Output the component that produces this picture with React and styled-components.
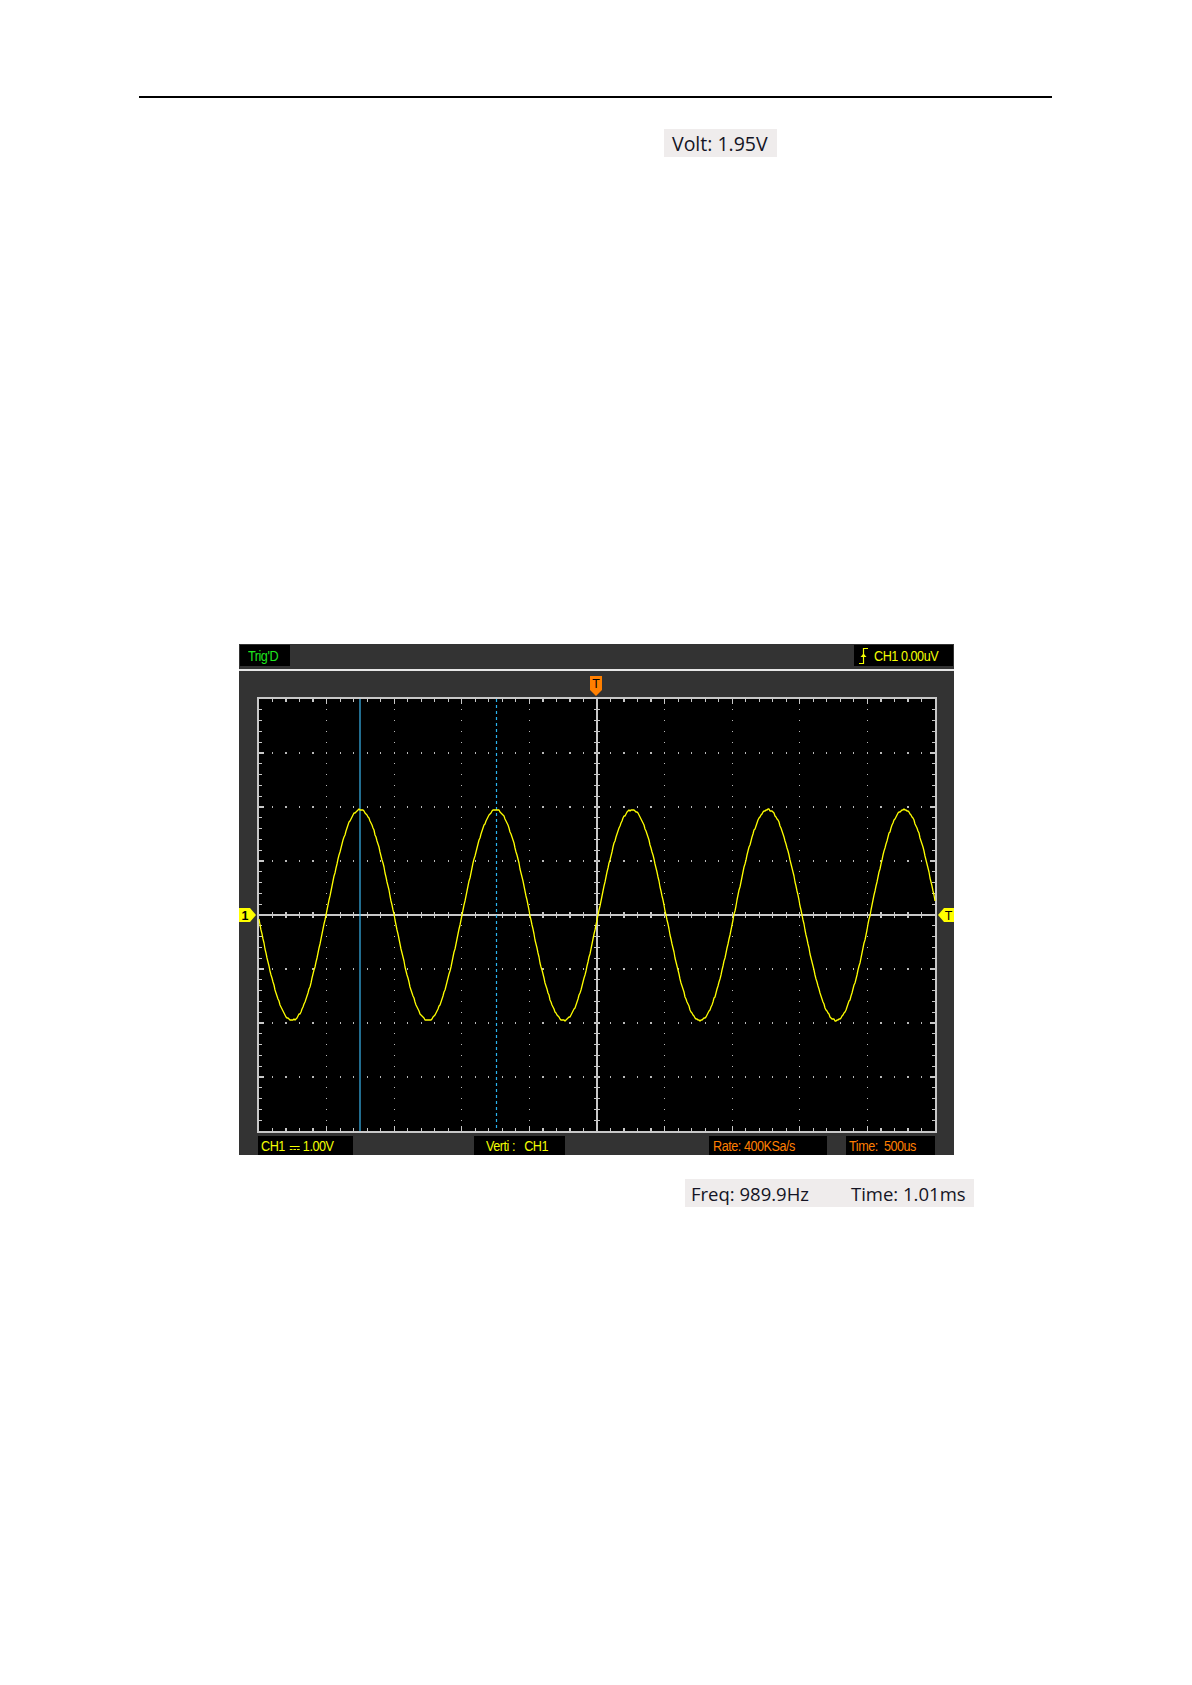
import React from "react";
import styled, { createGlobalStyle } from "styled-components";

const GlobalStyle = createGlobalStyle`
  html, body {
    margin: 0;
    padding: 0;
    background: #fff;
  }
  body {
    font-family: "Open Sans", "Liberation Sans", sans-serif;
  }
`;

/* page holding the printed manual sheet */
const Page = styled.div`
  width: 1192px;
  min-height: 1685px;
  padding-top: 96px;
  box-sizing: border-box;
  display: flex;
  flex-direction: column;
`;

const HeaderRule = styled.div`
  margin-left: 139px;
  width: 913px;
  height: 2px;
  background: #000;
`;

/* grey captured readout boxes (Volt / Freq / Time) */
const Readout = styled.div`
  align-self: flex-start;
  margin-left: ${(p) => p.$left}px;
  margin-top: ${(p) => p.$top}px;
  height: 28px;
  padding: 0 ${(p) => p.$padRight}px 0 ${(p) => p.$pad}px;
  display: flex;
  align-items: center;
  background: #efecec;
  color: #141424;
  font-size: ${(p) => p.$size}px;
  white-space: pre;
`;

const ReadoutItem = styled.span`
  width: ${(p) => (p.$w ? `${p.$w}px` : "auto")};
`;

/* oscilloscope screen capture */
const Scope = styled.div`
  margin-left: 239px;
  margin-top: 487px;
  width: 715px;
  height: 511px;
  background: #333;
  display: flex;
  flex-direction: column;
  font-family: "Liberation Sans", Arial, sans-serif;
`;

const TopBar = styled.div`
  height: 25px;
  padding: 1px 1px 0;
  box-sizing: border-box;
  display: flex;
  justify-content: space-between;
  align-items: flex-start;
`;

const Divider = styled.div`
  height: 2px;
  background: #e6e6e6;
`;

const Screen = styled.svg`
  display: block;
  width: 715px;
  height: 464px;
`;

const LabelRow = styled.div`
  height: 20px;
  display: flex;
  align-items: flex-end;
`;

const Tag = styled.div`
  width: ${(p) => p.$w}px;
  height: ${(p) => p.$h || 19}px;
  margin-left: ${(p) => p.$offset || 0}px;
  padding-left: ${(p) => p.$pad}px;
  box-sizing: border-box;
  display: flex;
  align-items: center;
  overflow: hidden;
  background: #000;
  color: ${(p) => p.$color};
`;

/* the scope font is tall and narrow */
const TagText = styled.span`
  display: inline-flex;
  align-items: center;
  font-size: 14px;
  letter-spacing: -0.5px;
  white-space: pre;
  transform: scaleX(0.9);
  transform-origin: left center;
`;

const DcMark = styled.span`
  display: inline-block;
  width: 11px;
  height: 2px;
  margin: 4px 4px 0 5px;
  border-top: 1px solid currentColor;
  border-bottom: 1px dashed currentColor;
`;

const SlopeIcon = styled.svg`
  width: 9px;
  height: 18px;
  margin-right: 6px;
  flex: none;
`;

const YELLOW = "#f4ff00";
const ORANGE = "#ff7f00";
const GRID = "#c8c8c8";

// grid geometry inside the screen svg
const X0 = 20;
const X1 = 696;
const Y0 = 28;
const Y1 = 460;
const DX = (X1 - X0) / 10;
const DY = (Y1 - Y0) / 8;
const CX = (X0 + X1) / 2;
const CY = (Y0 + Y1) / 2;

function gridPaths() {
  let ticks = "";
  let dots = "";
  for (let i = 1; i < 50; i++) {
    const x = X0 + (i * DX) / 5;
    const len = i % 5 === 0 ? 5 : 3;
    ticks += `M${x} ${Y0}v${len}M${x} ${Y1}v${-len}M${x} ${CY - 3}v6`;
  }
  for (let j = 1; j < 40; j++) {
    const y = Y0 + (j * DY) / 5;
    const len = j % 5 === 0 ? 5 : 3;
    ticks += `M${X0} ${y}h${len}M${X1} ${y}h${-len}M${CX - 3} ${y}h6`;
  }
  for (let k = 1; k < 10; k++) {
    if (k === 5) continue;
    const x = X0 + k * DX;
    for (let j = 1; j < 40; j++) {
      const y = Y0 + (j * DY) / 5;
      dots += `M${x - 0.6} ${y - 0.6}h1.2v1.2h-1.2z`;
    }
  }
  for (let m = 1; m < 8; m++) {
    if (m === 4) continue;
    const y = Y0 + m * DY;
    for (let i = 1; i < 50; i++) {
      const x = X0 + (i * DX) / 5;
      dots += `M${x - 0.6} ${y - 0.6}h1.2v1.2h-1.2z`;
    }
  }
  return { ticks, dots };
}

function wavePoints() {
  const period = 136;
  const amp = 1.95 * DY;
  const cross = 359;
  const pts = [];
  for (let x = X0; x <= X1; x += 1) {
    const noise = (((x * 7919) % 5) - 2) * 0.3;
    const y = CY - amp * Math.sin((2 * Math.PI * (x - cross)) / period) + noise;
    pts.push(`${x},${Math.round(y)}`);
  }
  return pts.join(" ");
}

const { ticks, dots } = gridPaths();
const wave = wavePoints();

function ScopeScreen() {
  return (
    <Screen viewBox="0 0 715 464">
      <rect x={X0} y={Y0} width={X1 - X0} height={Y1 - Y0} fill="#000" />
      <g shapeRendering="crispEdges" stroke={GRID} fill="none">
        <rect x={X0 - 1} y={Y0 - 1} width={X1 - X0 + 2} height={Y1 - Y0 + 2} strokeWidth="2" />
        <path d={`M${X0} ${CY}H${X1}M${CX} ${Y0}V${Y1}`} strokeWidth="1.5" />
        <path d={ticks} strokeWidth="1.2" />
      </g>
      <path d={dots} fill="#b8b8b8" shapeRendering="crispEdges" />
      <line x1="121" y1={Y0} x2="121" y2={Y1} stroke="#3ab8f0" strokeWidth="1.2" />
      <line x1="257.5" y1={Y0} x2="257.5" y2={Y1} stroke="#2ab4f0" strokeWidth="1.2" strokeDasharray="3 3" />
      <polyline points={wave} fill="none" stroke="#ffff00" strokeWidth="1.3" strokeLinejoin="round" />

      {/* channel 1 ground marker */}
      <polygon points="0,237 11,237 17,244 11,251 0,251" fill="#ffff00" />
      <text x="6" y="248.5" fontSize="12.5" fontWeight="bold" textAnchor="middle" fill="#000" fontFamily="Liberation Sans, Arial, sans-serif">1</text>
      {/* trigger level marker */}
      <polygon points="699,244 705,237 715,237 715,251 705,251" fill="#ffff00" />
      <text x="709.5" y="248.5" fontSize="12.5" textAnchor="middle" fill="#000" fontFamily="Liberation Sans, Arial, sans-serif">T</text>
      {/* trigger position marker */}
      <polygon points="351,5 363,5 363,19 357,25 351,19" fill={ORANGE} />
      <text x="357" y="17" fontSize="12.5" textAnchor="middle" fill="#000" fontFamily="Liberation Sans, Arial, sans-serif">T</text>
    </Screen>
  );
}

export default function App() {
  return (
    <Page>
      <GlobalStyle />
      <HeaderRule />
      <Readout $left={664} $top={31} $pad={8} $padRight={9} $size={19.5}>
        <ReadoutItem>Volt: 1.95V</ReadoutItem>
      </Readout>

      <Scope>
        <TopBar>
          <Tag $w={50} $h={21} $pad={8} $color="#1ee61e">
            <TagText>Trig'D</TagText>
          </Tag>
          <Tag $w={99} $h={21} $pad={5} $color={YELLOW}>
            <SlopeIcon viewBox="0 0 9 18">
              <path d="M0 16.5H4.5V1.5H9" stroke={YELLOW} strokeWidth="1.2" fill="none" />
              <path d="M1.5 10L4.5 6.5L7.5 10Z" fill={YELLOW} />
            </SlopeIcon>
            <TagText>CH1 0.00uV</TagText>
          </Tag>
        </TopBar>
        <Divider />
        <ScopeScreen />
        <LabelRow>
          <Tag $w={95} $offset={19} $pad={3} $color={YELLOW}>
            <TagText>
              CH1<DcMark />1.00V
            </TagText>
          </Tag>
          <Tag $w={91} $offset={121} $pad={12} $color={YELLOW}>
            <TagText>Verti :   CH1</TagText>
          </Tag>
          <Tag $w={118} $offset={144} $pad={4} $color={ORANGE}>
            <TagText>Rate: 400KSa/s</TagText>
          </Tag>
          <Tag $w={89} $offset={19} $pad={3} $color={ORANGE}>
            <TagText>Time:  500us</TagText>
          </Tag>
        </LabelRow>
      </Scope>

      <Readout $left={685} $top={24} $pad={6} $padRight={8} $size={18.5}>
        <ReadoutItem $w={160}>Freq: 989.9Hz</ReadoutItem>
        <ReadoutItem>Time: 1.01ms</ReadoutItem>
      </Readout>
    </Page>
  );
}
